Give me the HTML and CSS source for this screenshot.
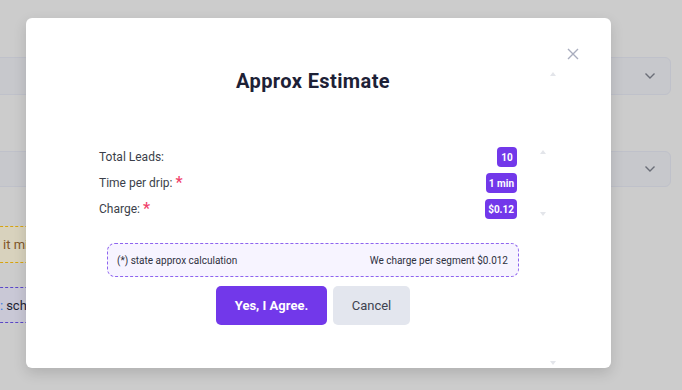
FILE: index.html
```html
<!DOCTYPE html>
<html>
<head>
<meta charset="utf-8">
<link rel="stylesheet" href="styles.css">
</head>
<body>
<div class="page">
  <div class="select sel1"><svg class="chev" width="12" height="8" viewBox="0 0 12 8"><path d="M1.5 1.5 L6 6 L10.5 1.5" fill="none" stroke="#6b6e78" stroke-width="1.4"/></svg></div>
  <div class="select sel2"><svg class="chev" width="12" height="8" viewBox="0 0 12 8"><path d="M1.5 1.5 L6 6 L10.5 1.5" fill="none" stroke="#6b6e78" stroke-width="1.4"/></svg></div>
  <div class="warn">it might take a while</div>
  <div class="info"><span class="blue">:</span><span>schedule drip</span></div>
</div>

<div class="modal">
  <svg class="close" width="12" height="12" viewBox="0 0 12 12"><path d="M1 1 L11 11 M11 1 L1 11" stroke="#a9adbe" stroke-width="1.4" fill="none"/></svg>
  <span class="tri up t1"></span>
  <span class="tri up t2"></span>
  <span class="tri down t3"></span>
  <span class="tri down t4"></span>

  <h2 class="title">Approx Estimate</h2>

  <div class="rows">
    <div class="row"><span class="label">Total Leads:</span><span class="badge">10</span></div>
    <div class="row"><span class="label">Time per drip: <span class="req">*</span></span><span class="badge">1 min</span></div>
    <div class="row"><span class="label">Charge: <span class="req">*</span></span><span class="badge">$0.12</span></div>
  </div>

  <div class="note">
    <span>(*) state approx calculation</span>
    <span>We charge per segment $0.012</span>
  </div>

  <div class="actions">
    <button class="btn primary">Yes, I Agree.</button>
    <button class="btn secondary">Cancel</button>
  </div>
</div>
</body>
</html>
```

FILE: styles.css
```css
* { box-sizing: border-box; }
html, body { margin: 0; padding: 0; }
body {
  width: 682px;
  height: 390px;
  overflow: hidden;
  position: relative;
  background: #cccccc;
  font-family: Roboto, "Liberation Sans", sans-serif;
}
.page {
  padding-top: 57px;
  display: flex;
  flex-direction: column;
}
.select {
  margin-left: -20px;
  width: 691px;
  border: 1px solid #bfc1ca;
  border-radius: 6px;
  background: #c7c8cc;
  display: flex;
  align-items: center;
  justify-content: flex-end;
  padding-right: 14px;
}
.sel1 { height: 38px; }
.sel2 { height: 36px; margin-top: 56px; }
.warn, .info {
  margin-left: -10px;
  width: 200px;
  display: flex;
  align-items: center;
  font-size: 13px;
  white-space: nowrap;
}
.warn {
  margin-top: 39px;
  height: 37px;
  border: 1px dashed #d6a30f;
  border-left: none;
  background: #d8d2bd;
  color: #80562a;
  padding-left: 13px;
}
.info {
  margin-top: 24px;
  height: 36px;
  border: 1px dashed #5a47c8;
  border-left: none;
  background: #c9c8d6;
  color: #1f1f33;
  padding-left: 10px;
}
.blue { color: #2f7be6; margin-right: 3px; }

.modal {
  position: absolute;
  left: 26px;
  top: 18px;
  width: 585px;
  height: 350px;
  background: #ffffff;
  border-radius: 6px;
  box-shadow: 0 5px 14px rgba(0,0,0,0.14);
  padding: 51px 11px 0 0;
  display: flex;
  flex-direction: column;
  align-items: center;
}
.close { position: absolute; left: 541px; top: 30px; }
.tri { position: absolute; width: 0; height: 0; border-left: 3px solid transparent; border-right: 3px solid transparent; }
.tri.up { border-bottom: 4px solid #e3e5ea; }
.tri.down { border-top: 4px solid #e3e5ea; }
.t1 { left: 524px; top: 54px; }
.t2 { left: 514px; top: 132px; }
.t3 { left: 514px; top: 194px; }
.t4 { left: 524px; top: 343px; }

.title {
  margin: 0;
  font-size: 20px;
  line-height: 24px;
  font-weight: 700;
  color: #1d2136;
  letter-spacing: 0.4px;
}
.rows {
  margin-top: 54px;
  width: 418px;
  margin-right: 10px;
  display: flex;
  flex-direction: column;
  gap: 6px;
}
.row {
  height: 20px;
  display: flex;
  align-items: center;
  justify-content: space-between;
}
.label { font-size: 12px; color: #3b3f4a; display: flex; align-items: center; gap: 3px; }
.req { color: #f0426a; font-size: 16px; line-height: 12px; font-weight: 500; }
.badge {
  height: 20px;
  padding: 0 3px;
  min-width: 20px;
  display: flex;
  align-items: center;
  justify-content: center;
  background: #7238ea;
  color: #ffffff;
  border-radius: 4px;
  font-size: 10px;
  font-weight: 700;
}
.note {
  margin-top: 24px;
  width: 412px;
  height: 34px;
  border: 1px dashed #8e64ef;
  border-radius: 8px;
  background: #f7f4ff;
  display: flex;
  align-items: center;
  justify-content: space-between;
  padding: 0 10px 0 9px;
  font-size: 10px;
  color: #2e3140;
}
.actions {
  margin-top: 9px;
  display: flex;
  gap: 6px;
}
.btn {
  height: 39px;
  border: none;
  border-radius: 5px;
  font-family: inherit;
  font-size: 13px;
  cursor: pointer;
}
.primary {
  width: 111px;
  background: #7238ea;
  color: #ffffff;
  font-weight: 700;
}
.secondary {
  width: 77px;
  background: #e3e6ee;
  color: #3e4350;
}
```
